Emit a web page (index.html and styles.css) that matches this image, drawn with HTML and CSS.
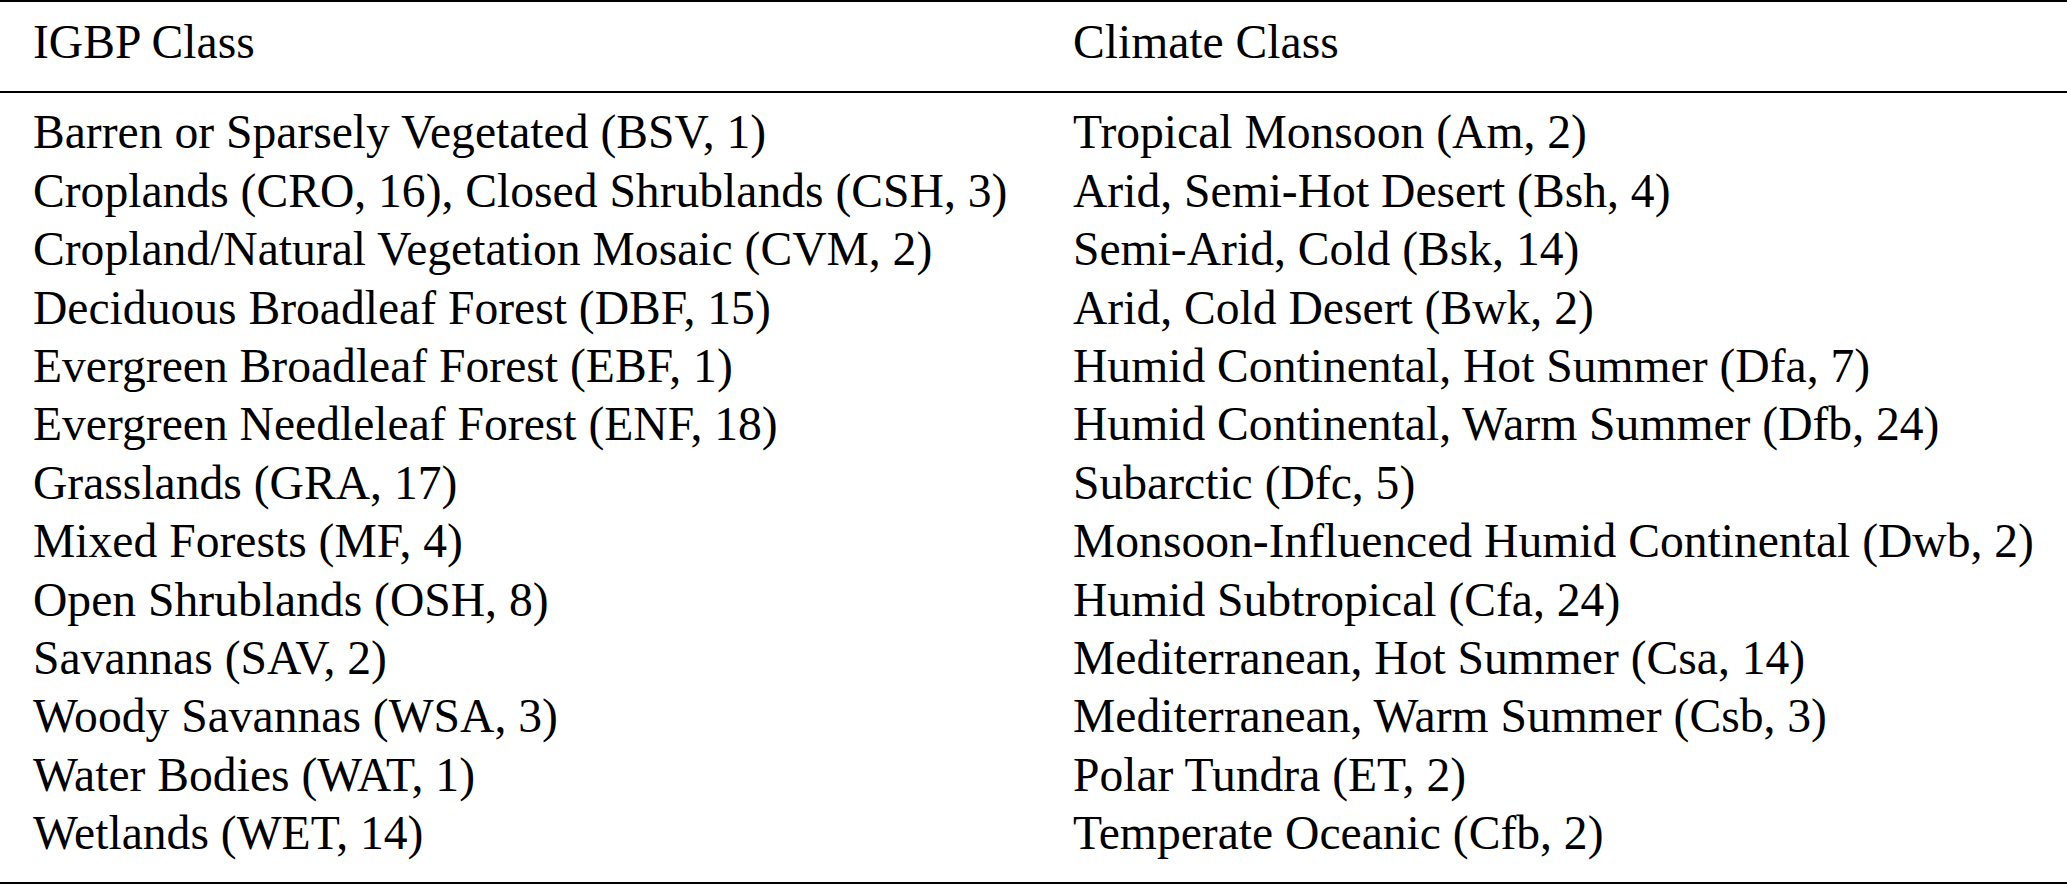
FILE: index.html
```html
<!DOCTYPE html>
<html lang="en">
<head>
<meta charset="utf-8">
<title>IGBP and Climate Classes</title>
<link rel="stylesheet" href="styles.css">
</head>
<body>
<table class="classes">
  <colgroup>
    <col class="col-igbp">
    <col class="col-climate">
  </colgroup>
  <thead>
    <tr>
      <th>IGBP Class</th>
      <th>Climate Class</th>
    </tr>
  </thead>
  <tbody>
    <tr class="first"><td>Barren or Sparsely Vegetated (BSV, 1)</td><td>Tropical Monsoon (Am, 2)</td></tr>
    <tr><td>Croplands (CRO, 16), Closed Shrublands (CSH, 3)</td><td>Arid, Semi-Hot Desert (Bsh, 4)</td></tr>
    <tr><td>Cropland/Natural Vegetation Mosaic (CVM, 2)</td><td>Semi-Arid, Cold (Bsk, 14)</td></tr>
    <tr><td>Deciduous Broadleaf Forest (DBF, 15)</td><td>Arid, Cold Desert (Bwk, 2)</td></tr>
    <tr><td>Evergreen Broadleaf Forest (EBF, 1)</td><td>Humid Continental, Hot Summer (Dfa, 7)</td></tr>
    <tr><td>Evergreen Needleleaf Forest (ENF, 18)</td><td>Humid Continental, Warm Summer (Dfb, 24)</td></tr>
    <tr><td>Grasslands (GRA, 17)</td><td>Subarctic (Dfc, 5)</td></tr>
    <tr><td>Mixed Forests (MF, 4)</td><td>Monsoon-Influenced Humid Continental (Dwb, 2)</td></tr>
    <tr><td>Open Shrublands (OSH, 8)</td><td>Humid Subtropical (Cfa, 24)</td></tr>
    <tr><td>Savannas (SAV, 2)</td><td>Mediterranean, Hot Summer (Csa, 14)</td></tr>
    <tr><td>Woody Savannas (WSA, 3)</td><td>Mediterranean, Warm Summer (Csb, 3)</td></tr>
    <tr><td>Water Bodies (WAT, 1)</td><td>Polar Tundra (ET, 2)</td></tr>
    <tr class="last"><td>Wetlands (WET, 14)</td><td>Temperate Oceanic (Cfb, 2)</td></tr>
  </tbody>
</table>
</body>
</html>
```
FILE: styles.css
```css
html, body {
  margin: 0;
  padding: 0;
  background: #ffffff;
}

body {
  font-family: "Liberation Serif", "Times New Roman", serif;
  font-size: 47.6px;
  color: #000000;
}

.classes {
  width: 2067px;
  table-layout: fixed;
  border-collapse: collapse;
  border-top: 2px solid #000;
  border-bottom: 2px solid #000;
}

.col-igbp {
  width: 1040px;
}

.col-climate {
  width: 1027px;
}

.classes th,
.classes td {
  padding: 0 33px;
  text-align: left;
  font-weight: normal;
  line-height: 58.4px;
  white-space: nowrap;
  vertical-align: top;
}

.classes thead th {
  padding-top: 11px;
  padding-bottom: 20px;
  border-bottom: 2px solid #000;
}

.classes .first td {
  padding-top: 10px;
}

.classes .last td {
  padding-bottom: 19px;
}
```
